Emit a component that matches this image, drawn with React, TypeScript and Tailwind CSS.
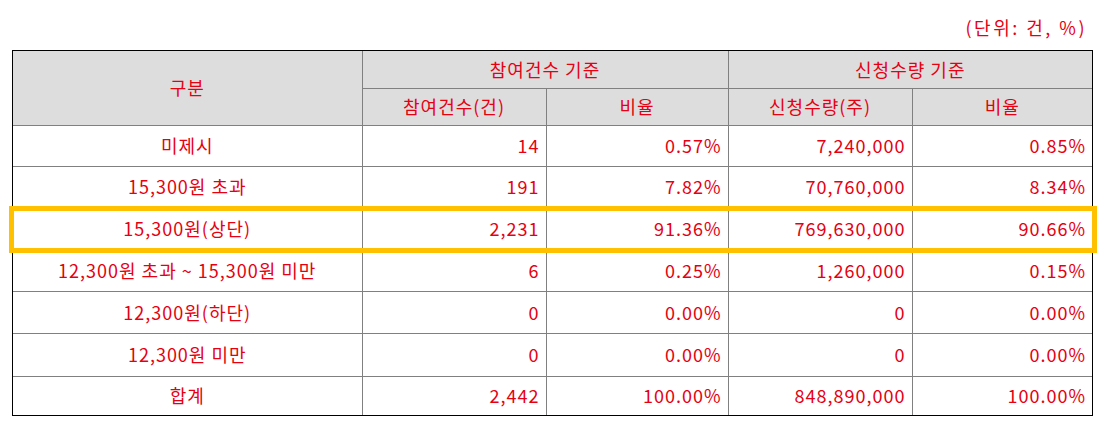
import React from "react";

type Row = {
  label: string;
  count: string;
  countRate: string;
  qty: string;
  qtyRate: string;
  highlight?: boolean;
  h: string;
};

const rows: Row[] = [
  { label: "미제시", count: "14", countRate: "0.57%", qty: "7,240,000", qtyRate: "0.85%", h: "h-[41px]" },
  { label: "15,300원 초과", count: "191", countRate: "7.82%", qty: "70,760,000", qtyRate: "8.34%", h: "h-[41px]" },
  { label: "15,300원(상단)", count: "2,231", countRate: "91.36%", qty: "769,630,000", qtyRate: "90.66%", highlight: true, h: "h-[42px]" },
  { label: "12,300원 초과 ~ 15,300원 미만", count: "6", countRate: "0.25%", qty: "1,260,000", qtyRate: "0.15%", h: "h-[42px]" },
  { label: "12,300원(하단)", count: "0", countRate: "0.00%", qty: "0", qtyRate: "0.00%", h: "h-[42px]" },
  { label: "12,300원 미만", count: "0", countRate: "0.00%", qty: "0", qtyRate: "0.00%", h: "h-[43px]" },
  { label: "합계", count: "2,442", countRate: "100.00%", qty: "848,890,000", qtyRate: "100.00%", h: "h-[39px]" },
];

const cell = "border border-[#808080] p-0";
const num = `${cell} text-right pr-[6px]`;

export default function App() {
  return (
    <div
      className="w-[1105px] h-[427px] bg-white px-[12px] text-[#e60012] text-[18px] tracking-[1px]"
      style={{ fontFamily: '"Noto Sans CJK KR", "DejaVu Sans", sans-serif' }}
    >
      <div className="h-[50px] flex items-center justify-end pt-[4px] pr-[6px] tracking-[2.5px]">
        (단위: 건, %)
      </div>
      <div className="border border-black">
        <table className="w-full border-collapse border-hidden table-fixed">
          <colgroup>
            <col className="w-[349px]" />
            <col className="w-[184px]" />
            <col className="w-[182px]" />
            <col className="w-[184px]" />
            <col />
          </colgroup>
          <thead className="bg-[#dddddd]">
            <tr className="h-[37px]">
              <th rowSpan={2} className={`${cell} font-normal text-center`}>
                구분
              </th>
              <th colSpan={2} className={`${cell} font-normal text-center`}>
                참여건수 기준
              </th>
              <th colSpan={2} className={`${cell} font-normal text-center`}>
                신청수량 기준
              </th>
            </tr>
            <tr className="h-[37px]">
              <th className={`${cell} font-normal text-center`}>참여건수(건)</th>
              <th className={`${cell} font-normal text-center`}>비율</th>
              <th className={`${cell} font-normal text-center`}>신청수량(주)</th>
              <th className={`${cell} font-normal text-center`}>비율</th>
            </tr>
          </thead>
          <tbody>
            {rows.map((r) => (
              <tr key={r.label} className={r.h}>
                <td className={`${cell} text-center relative`}>
                  {r.label}
                  {r.highlight && (
                    <div className="absolute -left-[4px] -top-[2px] w-[1088px] h-[47px] border-[5px] border-[#ffc000] pointer-events-none z-10" />
                  )}
                </td>
                <td className={num}>{r.count}</td>
                <td className={num}>{r.countRate}</td>
                <td className={num}>{r.qty}</td>
                <td className={num}>{r.qtyRate}</td>
              </tr>
            ))}
          </tbody>
        </table>
      </div>
    </div>
  );
}
